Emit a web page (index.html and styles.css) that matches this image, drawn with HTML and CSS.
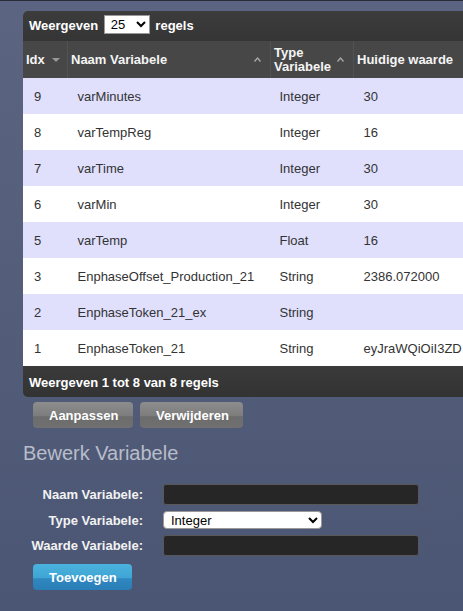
FILE: index.html
```html
<!DOCTYPE html>
<html lang="nl">
<head>
  <meta charset="UTF-8" />
  <title>Variabelen</title>
  <link rel="stylesheet" href="styles.css">
</head>
<body>
  <div class="page">
    <div class="table-wrap">
      <div class="table-top">
        Weergeven
        <select class="length-select">
          <option>25</option>
        </select>
        regels
      </div>
      <table class="var-table">
        <thead>
          <tr>
            <th class="col-idx">Idx <span class="sort down"></span></th>
            <th class="col-name">Naam Variabele
              <svg class="sort-up" width="7" height="5" viewBox="0 0 7 5"><path d="M0.5 4.5 L3.5 1 L6.5 4.5" fill="none" stroke="#aaa" stroke-width="1.3"/></svg>
            </th>
            <th class="col-type">Type<br>Variabele
              <svg class="sort-up" width="7" height="5" viewBox="0 0 7 5"><path d="M0.5 4.5 L3.5 1 L6.5 4.5" fill="none" stroke="#aaa" stroke-width="1.3"/></svg>
            </th>
            <th class="col-value">Huidige waarde</th>
          </tr>
        </thead>
        <tbody>
          <tr class="odd"><td>9</td><td>varMinutes</td><td>Integer</td><td>30</td></tr>
          <tr><td>8</td><td>varTempReg</td><td>Integer</td><td>16</td></tr>
          <tr class="odd"><td>7</td><td>varTime</td><td>Integer</td><td>30</td></tr>
          <tr><td>6</td><td>varMin</td><td>Integer</td><td>30</td></tr>
          <tr class="odd"><td>5</td><td>varTemp</td><td>Float</td><td>16</td></tr>
          <tr><td>3</td><td>EnphaseOffset_Production_21</td><td>String</td><td>2386.072000</td></tr>
          <tr class="odd"><td>2</td><td>EnphaseToken_21_ex</td><td>String</td><td></td></tr>
          <tr><td>1</td><td>EnphaseToken_21</td><td>String</td><td>eyJraWQiOiI3ZD</td></tr>
        </tbody>
      </table>
      <div class="table-bottom">Weergeven 1 tot 8 van 8 regels</div>
    </div>

    <div class="actions">
      <button class="btn">Aanpassen</button>
      <button class="btn">Verwijderen</button>
    </div>

    <h2>Bewerk Variabele</h2>

    <form class="edit-form">
      <div class="row">
        <label for="varname">Naam Variabele:</label>
        <input type="text" id="varname" class="text-input" />
      </div>
      <div class="row">
        <label for="vartype">Type Variabele:</label>
        <select id="vartype" class="type-select">
          <option>Integer</option>
          <option>Float</option>
          <option>String</option>
        </select>
      </div>
      <div class="row">
        <label for="varvalue">Waarde Variabele:</label>
        <input type="text" id="varvalue" class="text-input" />
      </div>
      <button type="button" class="btn btn-blue">Toevoegen</button>
    </form>
  </div>
</body>
</html>
```

FILE: styles.css
```css
html, body {
  margin: 0;
  padding: 0;
  height: 100%;
}
body {
  font-family: Arial, "Liberation Sans", sans-serif;
  font-size: 13px;
  background: linear-gradient(#5b6581, #4b5674);
  border-top: 1px solid #2a2d38;
  overflow: hidden;
}
.page {
  padding: 10px 0 0 23px;
}
.table-wrap {
  width: 440px;
  border-radius: 5px 0 0 5px;
  overflow: hidden;
}
.table-top {
  height: 30px;
  line-height: 30px;
  padding-left: 6px;
  color: #fff;
  font-weight: bold;
  background: linear-gradient(#3c3c3c, #353535);
}
.length-select {
  font-family: Arial, "Liberation Sans", sans-serif;
  font-size: 13px;
  width: 46px;
  height: 19px;
  margin: 0 2px;
  padding: 0 0 0 2px;
  vertical-align: 1px;
  border: 1px solid #999;
  border-radius: 0;
  background: #fff;
}
.var-table {
  width: 100%;
  border-collapse: collapse;
  table-layout: fixed;
}
.var-table th {
  height: 37px;
  padding: 0 0 0 3px;
  text-align: left;
  color: #f4f4f4;
  font-weight: bold;
  background: #474747;
  border-left: 1px solid #525252;
  position: relative;
  line-height: 14px;
  white-space: nowrap;
}
.var-table th:first-child {
  border-left: none;
}
.col-idx { width: 41px; }
.col-name { width: 199px; }
.col-type { width: 79px; }
.sort.down {
  position: absolute;
  right: 7px;
  top: 17px;
  width: 0;
  height: 0;
  border-left: 4px solid transparent;
  border-right: 4px solid transparent;
  border-top: 4px solid #999;
}
.sort-up {
  position: absolute;
  right: 9px;
  top: 16px;
}
.var-table td {
  height: 36px;
  padding: 0 0 0 11px;
  color: #333;
  background: #fff;
  white-space: nowrap;
  overflow: hidden;
}
.var-table tr.odd td {
  background: #e0e0fd;
}
.var-table td:nth-child(2) {
  padding-left: 10px;
}
.var-table td:nth-child(3) {
  padding-left: 9px;
}
.var-table td:nth-child(4) {
  padding-left: 10px;
}
.table-bottom {
  height: 31px;
  line-height: 33px;
  padding-left: 6px;
  color: #fff;
  font-weight: bold;
  background: linear-gradient(#3a3a3a, #333);
}
.actions {
  display: flex;
  gap: 7px;
  padding: 5px 0 0 10px;
}
.btn {
  font-family: Arial, "Liberation Sans", sans-serif;
  font-size: 13px;
  font-weight: bold;
  color: #fff;
  height: 26px;
  padding: 0 16px;
  border: none;
  border-radius: 4px;
  background: linear-gradient(#8d8d8d 0%, #7c7c7c 55%, #6c6c6c 56%, #707070 100%);
  cursor: pointer;
}
.actions .btn:first-child {
  width: 100px;
}
.actions .btn:last-child {
  width: 103px;
}
h2 {
  margin: 14px 0 0 0;
  font-size: 20px;
  font-weight: normal;
  color: #b9bdc9;
}
.edit-form {
  padding-top: 19px;
}
.row {
  display: flex;
  align-items: center;
  margin-bottom: 6px;
}
.row label {
  width: 120px;
  text-align: right;
  color: #f2f2f2;
  font-weight: bold;
  margin-right: 20px;
}
.text-input {
  width: 254px;
  height: 19px;
  padding: 0;
  background: #262626;
  border: 1px solid #585858;
  border-radius: 3px;
}
.type-select {
  font-family: Arial, "Liberation Sans", sans-serif;
  font-size: 13px;
  width: 159px;
  height: 18px;
  padding: 0 0 0 3px;
  border: 1px solid #999;
  border-radius: 4px;
  background: #fff;
  color: #000;
}
.btn-blue {
  margin: 2px 0 0 10px;
  width: 99px;
  background: linear-gradient(#4ab3de 0%, #3fa4d4 55%, #2f88c1 56%, #2b7eb7 100%);
}
```
